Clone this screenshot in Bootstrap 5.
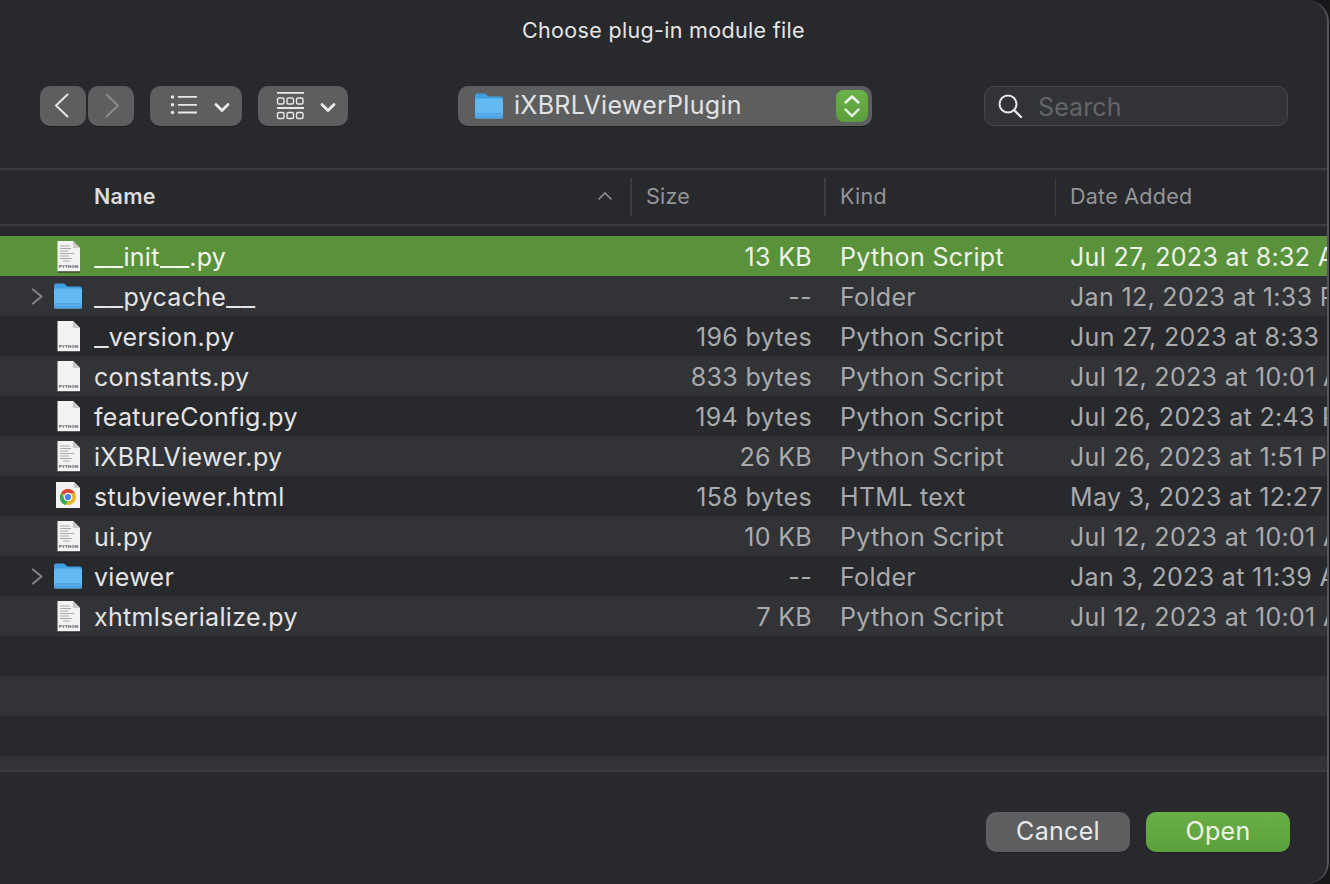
<!DOCTYPE html>
<html lang="en"><head><meta charset="utf-8"><title>Choose plug-in module file</title>
<link href="https://cdn.jsdelivr.net/npm/bootstrap@5.3.0/dist/css/bootstrap.min.css" rel="stylesheet">
<style>
html,body{margin:0;height:884px;overflow:hidden;background:#17171a}
body{font-family:Inter,"Liberation Sans",sans-serif;color:#e4e4e5}
.dlg{width:1329px;height:884px;background:#28292c;border-right:2px solid #55565a;border-bottom-right-radius:22px;border-top-right-radius:22px;overflow:hidden}
.dtitle{height:60px;padding-top:17px;font-size:21.5px;line-height:27px;letter-spacing:.32px;color:#e5e5e6}
.tbar{height:110px;padding-top:26px;padding-left:40px;border-bottom:2px solid #3c3d40;align-items:flex-start}
.tb{height:40px;background:#5d5e60;border-radius:10px;box-shadow:0 1px 1px rgba(0,0,0,.25)}
.tb-nav{width:46px}.tb-nav+.tb-nav{margin-left:2px}
.tb-list{width:92px;margin-left:16px}.tb-grid{width:90px;margin-left:16px}
.tb-path{width:414px;margin-left:110px;padding-left:16px;font-size:25px;color:#e3e3e4;letter-spacing:.3px;position:relative}
.tb-path svg:first-child{margin-right:10px}
.tb-step{position:absolute;right:4px;top:4px;width:32px;height:32px;border-radius:8px;background:linear-gradient(#6bb247,#5b9e3b)}
.tb-search{width:304px;height:40px;margin-left:112px;padding-left:12px;background:#323337;border:1px solid #47484b;border-radius:10px;font-size:25px;letter-spacing:.1px;color:#646568}
.tb-search span{padding-top:3px}
.tb-search svg{margin-right:15px}
.thead{height:56px;border-bottom:2px solid #3c3d40;font-size:21.5px;color:#949597;letter-spacing:.25px}
.thead .c-name{font-weight:600;color:#dcdcdd;padding-left:94px;padding-right:18px}
.c-name{width:631px}.c-size{width:194px}.c-kind{width:230px}.c-date{flex:1;white-space:nowrap;overflow:hidden}
.thead .c-size,.thead .c-kind,.thead .c-date{padding-left:15px;position:relative}
.thead .c-size::before,.thead .c-kind::before,.thead .c-date::before{content:"";position:absolute;left:-1px;top:0;bottom:0;width:2px;background:#3c3d40}
.thead>div{height:38px;display:flex;align-items:center;padding-bottom:2px}
.tlist{height:546px;padding-top:10px;border-bottom:2px solid #3c3d40;overflow:hidden;font-size:25px;letter-spacing:.32px}
.frow{height:40px;overflow:hidden}
.frow>div{height:40px;line-height:42px}
.frow.alt{background:#323337}
.frow.sel{background:#5a923c;color:#f4f6f2}
.frow.sel .c-size,.frow.sel .c-kind,.frow.sel .c-date{color:#eef2ea}
.frow .c-name{position:relative;padding-left:94px;white-space:nowrap}
.frow .c-size{padding-right:13px;text-align:right;color:#a9aaac}
.frow .c-kind{padding-left:15px;color:#a9aaac}
.frow .c-date{padding-left:15px;color:#a9aaac}
.us,.us2{display:inline-block;letter-spacing:0;transform:scaleX(1.28);transform-origin:left center}
.us{margin-right:3.300px}.us2{margin-right:6.600px}
.fic{position:absolute;left:53px;top:4px;width:30px;height:34px}
.fold{position:absolute;left:53px;top:5.500px;width:30px;height:28px}
.disc{position:absolute;left:31px;top:12px;width:13px;height:17px}
.dfoot{height:112px;padding-top:40px;padding-right:37px;align-items:flex-start}
.dbtn{width:144px;height:40px;border:0;border-radius:10px;font-size:25px;line-height:38px;padding:0 0 2px;letter-spacing:.3px;color:#e9e9e9;box-shadow:0 1px 1px rgba(0,0,0,.25)}
.dbtn-c{background:#5d5e60}.dbtn-o{background:linear-gradient(#69b045,#5c9f3c);margin-left:16px;color:#edf3e9}
.dbtn-c:hover{background:#5d5e60;color:#e9e9e9}.dbtn-o:hover{background:linear-gradient(#69b045,#5c9f3c);color:#edf3e9}
</style></head><body>
<svg width="0" height="0" class="d-block"><defs>
<g id="doc"><path d="M4.500 1H20l7 7v23.500H4.500z" fill="#f3f3f3"/><path d="M20 1v7h7z" fill="#c9c9c9"/><path d="M4.500 32H27" stroke="#222" stroke-width="1"/><text x="15.700" y="28" font-size="4.200" font-weight="700" text-anchor="middle" fill="#444" font-family="Liberation Sans,sans-serif">PYTHON</text></g>
<g id="lines"><path d="M7 6h10M7 8.500h11M7 11h8M7 13.500h14M7 16h9M7 18.500h12M10 21h7" stroke="#a9a9a9" stroke-width="1"/></g>
<g id="folder"><path d="M1 8V4a2.500 2.500 0 0 1 2.500-2.500h7.500l3.500 3H27A2.500 2.500 0 0 1 29 7v3H1z" fill="#3f9fe3"/><rect x="1" y="6.500" width="28" height="20" rx="2" fill="#65b9f2"/><rect x="1" y="21" width="28" height="5.500" rx="1.500" fill="#4ea3e2"/><path d="M1 23h28" stroke="#73bdf0" stroke-width=".7"/></g>
<path id="disc" d="M2 1.500l8.500 7-8.500 7" fill="none" stroke="#808183" stroke-width="2.200" stroke-linecap="round" stroke-linejoin="round"/>
</defs></svg>
<div class="dlg d-flex flex-column">
 <div class="dtitle text-center">Choose plug-in module file</div>
 <div class="tbar d-flex">
  <div class="tb tb-nav"><svg class="d-block" width="46" height="40" viewBox="0 0 46 40"><path d="M27.500 8.500L16 19.500l11.500 11" fill="none" stroke="#e4e4e4" stroke-width="2" stroke-linecap="round" stroke-linejoin="round"/></svg></div>
  <div class="tb tb-nav"><svg class="d-block" width="46" height="40" viewBox="0 0 46 40"><path d="M18.500 8.500L30 19.500l-11.500 11" fill="none" stroke="#8a8b8c" stroke-width="2" stroke-linecap="round" stroke-linejoin="round"/></svg></div>
  <div class="tb tb-list"><svg class="d-block" width="92" height="40" viewBox="0 0 92 40"><g fill="#e8e8e8"><circle cx="22.500" cy="11" r="1.700"/><circle cx="22.500" cy="18.800" r="1.700"/><circle cx="22.500" cy="26.500" r="1.700"/></g><path d="M28 10.800h19M28 18.800h19M28 26.500h19" stroke="#e8e8e8" stroke-width="1.800"/><path d="M66 18.500l6 6 6-6" fill="none" stroke="#ededed" stroke-width="2.800" stroke-linecap="round" stroke-linejoin="round"/></svg></div>
  <div class="tb tb-grid"><svg class="d-block" width="90" height="40" viewBox="0 0 90 40"><path d="M19 6.800h27M19 22h27" stroke="#e8e8e8" stroke-width="1.800"/><g fill="none" stroke="#e8e8e8" stroke-width="1.400"><rect x="19.500" y="12" width="6.500" height="6" rx="1.500"/><rect x="29" y="12" width="6.500" height="6" rx="1.500"/><rect x="38.500" y="12" width="6.500" height="6" rx="1.500"/><rect x="19.500" y="26.500" width="6.500" height="6" rx="1.500"/><rect x="29" y="26.500" width="6.500" height="6" rx="1.500"/><rect x="38.500" y="26.500" width="6.500" height="6" rx="1.500"/></g><path d="M64 18.500l6 6 6-6" fill="none" stroke="#ededed" stroke-width="2.800" stroke-linecap="round" stroke-linejoin="round"/></svg></div>
  <div class="tb tb-path d-flex align-items-center"><svg width="30" height="28" viewBox="0 0 30 28"><use href="#folder"/></svg><span>iXBRLViewerPlugin</span>
   <div class="tb-step"><svg class="d-block" width="32" height="32" viewBox="0 0 32 32"><path d="M9.500 12.500L16 6.500l6.500 6M9.500 19.500L16 26l6.500-6.500" fill="none" stroke="#f1f6ee" stroke-width="2.400" stroke-linecap="round" stroke-linejoin="round"/></svg></div></div>
  <div class="tb-search d-flex align-items-center"><svg width="26" height="26" viewBox="0 0 26 26"><circle cx="11" cy="11" r="8.500" fill="none" stroke="#e6e6e6" stroke-width="2"/><path d="M17 17l7 7" stroke="#e6e6e6" stroke-width="2.400" stroke-linecap="round"/></svg><span>Search</span></div>
 </div>
 <div class="thead d-flex align-items-center">
  <div class="c-name justify-content-between"><span>Name</span><svg width="16" height="10" viewBox="0 0 16 10"><path d="M1.500 8.500L8 2l6.500 6.500" fill="none" stroke="#8f9092" stroke-width="1.600"/></svg></div>
  <div class="c-size">Size</div><div class="c-kind">Kind</div><div class="c-date">Date Added</div>
 </div>
 <div class="tlist">
  <div class="frow sel d-flex"><div class="c-name"><svg class="fic" viewBox="0 0 30 34"><use href="#doc"/><use href="#lines"/></svg><span class="us2">__</span>init<span class="us2">__</span>.py</div><div class="c-size">13 KB</div><div class="c-kind">Python Script</div><div class="c-date">Jul 27, 2023 at 8:32 AM</div></div>
  <div class="frow alt d-flex"><div class="c-name"><svg class="disc" viewBox="0 0 13 17"><use href="#disc"/></svg><svg class="fold" viewBox="0 0 30 28"><use href="#folder"/></svg><span class="us2">__</span>pycache<span class="us2">__</span></div><div class="c-size">--</div><div class="c-kind">Folder</div><div class="c-date">Jan 12, 2023 at 1:33 PM</div></div>
  <div class="frow d-flex"><div class="c-name"><svg class="fic" viewBox="0 0 30 34"><use href="#doc"/></svg><span class="us">_</span>version.py</div><div class="c-size">196 bytes</div><div class="c-kind">Python Script</div><div class="c-date">Jun 27, 2023 at 8:33 AM</div></div>
  <div class="frow alt d-flex"><div class="c-name"><svg class="fic" viewBox="0 0 30 34"><use href="#doc"/></svg>constants.py</div><div class="c-size">833 bytes</div><div class="c-kind">Python Script</div><div class="c-date">Jul 12, 2023 at 10:01 AM</div></div>
  <div class="frow d-flex"><div class="c-name"><svg class="fic" viewBox="0 0 30 34"><use href="#doc"/></svg>featureConfig.py</div><div class="c-size">194 bytes</div><div class="c-kind">Python Script</div><div class="c-date">Jul 26, 2023 at 2:43 PM</div></div>
  <div class="frow alt d-flex"><div class="c-name"><svg class="fic" viewBox="0 0 30 34"><use href="#doc"/><use href="#lines"/></svg>iXBRLViewer.py</div><div class="c-size">26 KB</div><div class="c-kind">Python Script</div><div class="c-date">Jul 26, 2023 at 1:51 PM</div></div>
  <div class="frow d-flex"><div class="c-name"><svg class="fic" viewBox="0 0 30 34"><path d="M3 2h18l6 6v20H3z" fill="#f3f3f3"/><path d="M21 2v6h6z" fill="#c9c9c9"/><circle cx="15" cy="17" r="8" fill="#e8b923"/><path d="M8.100 13A8 8 0 0 1 21.900 13H15a4 4 0 0 0-3.500 2z" fill="#d9483b"/><path d="M8.100 13l3.900 6.700a4 4 0 0 0 3.500 1.300L12 25a8 8 0 0 1-3.900-12z" fill="#3ba757"/><circle cx="15" cy="17" r="3.700" fill="#4b7ee8" stroke="#fff" stroke-width="1.200"/></svg>stubviewer.html</div><div class="c-size">158 bytes</div><div class="c-kind">HTML text</div><div class="c-date">May 3, 2023 at 12:27 PM</div></div>
  <div class="frow alt d-flex"><div class="c-name"><svg class="fic" viewBox="0 0 30 34"><use href="#doc"/><use href="#lines"/></svg>ui.py</div><div class="c-size">10 KB</div><div class="c-kind">Python Script</div><div class="c-date">Jul 12, 2023 at 10:01 AM</div></div>
  <div class="frow d-flex"><div class="c-name"><svg class="disc" viewBox="0 0 13 17"><use href="#disc"/></svg><svg class="fold" viewBox="0 0 30 28"><use href="#folder"/></svg>viewer</div><div class="c-size">--</div><div class="c-kind">Folder</div><div class="c-date">Jan 3, 2023 at 11:39 AM</div></div>
  <div class="frow alt d-flex"><div class="c-name"><svg class="fic" viewBox="0 0 30 34"><use href="#doc"/><use href="#lines"/></svg>xhtmlserialize.py</div><div class="c-size">7 KB</div><div class="c-kind">Python Script</div><div class="c-date">Jul 12, 2023 at 10:01 AM</div></div>
  <div class="frow"></div><div class="frow alt"></div><div class="frow"></div><div class="frow alt"></div>
 </div>
 <div class="dfoot d-flex justify-content-end">
  <button type="button" class="btn dbtn dbtn-c">Cancel</button>
  <button type="button" class="btn dbtn dbtn-o">Open</button>
 </div>
</div>
<script src="https://cdn.jsdelivr.net/npm/bootstrap@5.3.0/dist/js/bootstrap.bundle.min.js"></script>
</body></html>
